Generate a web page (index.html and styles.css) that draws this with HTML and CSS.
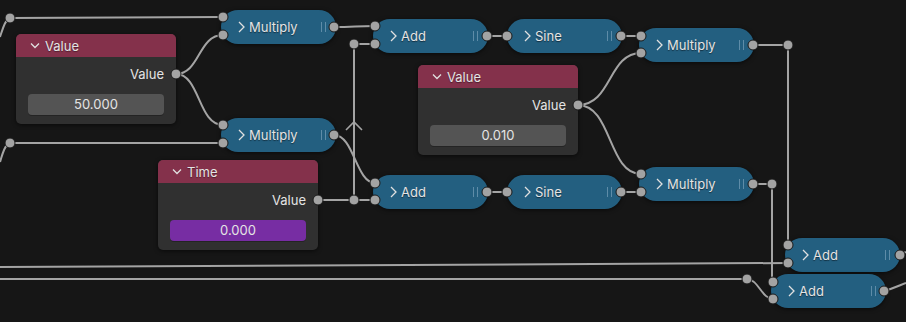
FILE: index.html
```html
<!DOCTYPE html>
<html>

<head>
    <title>Node Editor</title>
    <link rel="stylesheet" href="styles.css">
</head>

<body>
    <div class="canvas">

        <!-- wires go under the nodes -->
        <svg class="wires" width="906" height="322">
            <g class="wire">
                <path d="M0,37 C3,28 5,20 10,18 L223,17" />
                <path d="M0,162 C3,152 5,145 10,143 L223,143" />
                <path d="M176,74 C200,74 198,35 223,35" />
                <path d="M176,74 C200,74 198,125 223,125" />
                <path d="M334,27 C354,27 356,26 375,26" />
                <path d="M354,44 L375,44 M354,44 L354,200" />
                <path d="M318,200 L375,200" />
                <path d="M334,135 C354,135 356,183 375,183" />
                <path d="M487,36 L507,36 M621,36 L641,36" />
                <path d="M578,105 C612,105 608,53 641,53" />
                <path d="M578,105 C612,105 608,174 641,174" />
                <path d="M487,192 L507,192 M621,192 L641,192" />
                <path d="M753,45 L788,45 L788,245" />
                <path d="M753,184 L772,184 L772,282" />
                <path d="M0,267 C400,266 700,263 788,263" />
                <path d="M0,279 L747,279 C758,279 762,299 773,299" />
                <path d="M900,255 L906,252" />
                <path d="M884,291 C895,288 900,285 906,283" />
                <path class="arrow" d="M346,130 L354,122 L362,130" />
            </g>
        </svg>

        <!-- full nodes -->
        <div class="node" style="left:16px; top:34px;">
            <div class="node-head">
                <svg class="fold" width="10" height="6" viewBox="0 0 10 6"><path d="M1,0.5 L5,4.5 L9,0.5" /></svg>
                Value
            </div>
            <div class="node-body">
                <div class="out-label">Value</div>
                <div class="field">50.000</div>
            </div>
        </div>

        <div class="node" style="left:418px; top:65px;">
            <div class="node-head">
                <svg class="fold" width="10" height="6" viewBox="0 0 10 6"><path d="M1,0.5 L5,4.5 L9,0.5" /></svg>
                Value
            </div>
            <div class="node-body">
                <div class="out-label">Value</div>
                <div class="field">0.010</div>
            </div>
        </div>

        <div class="node" style="left:158px; top:160px;">
            <div class="node-head">
                <svg class="fold" width="10" height="6" viewBox="0 0 10 6"><path d="M1,0.5 L5,4.5 L9,0.5" /></svg>
                Time
            </div>
            <div class="node-body">
                <div class="out-label">Value</div>
                <div class="field field-anim">0.000</div>
            </div>
        </div>

        <!-- collapsed math nodes -->
        <div class="pill" style="left:221px; top:10px;">
            <svg class="open" width="7" height="12" viewBox="0 0 7 12"><path d="M1,1 L6,6 L1,11" /></svg>
            <span class="pill-name">Multiply</span>
            <span class="grip"></span>
        </div>
        <div class="pill" style="left:221px; top:118px;">
            <svg class="open" width="7" height="12" viewBox="0 0 7 12"><path d="M1,1 L6,6 L1,11" /></svg>
            <span class="pill-name">Multiply</span>
            <span class="grip"></span>
        </div>
        <div class="pill" style="left:373px; top:19px;">
            <svg class="open" width="7" height="12" viewBox="0 0 7 12"><path d="M1,1 L6,6 L1,11" /></svg>
            <span class="pill-name">Add</span>
            <span class="grip"></span>
        </div>
        <div class="pill" style="left:507px; top:19px;">
            <svg class="open" width="7" height="12" viewBox="0 0 7 12"><path d="M1,1 L6,6 L1,11" /></svg>
            <span class="pill-name">Sine</span>
            <span class="grip"></span>
        </div>
        <div class="pill" style="left:639px; top:28px;">
            <svg class="open" width="7" height="12" viewBox="0 0 7 12"><path d="M1,1 L6,6 L1,11" /></svg>
            <span class="pill-name">Multiply</span>
            <span class="grip"></span>
        </div>
        <div class="pill" style="left:373px; top:175px;">
            <svg class="open" width="7" height="12" viewBox="0 0 7 12"><path d="M1,1 L6,6 L1,11" /></svg>
            <span class="pill-name">Add</span>
            <span class="grip"></span>
        </div>
        <div class="pill" style="left:507px; top:175px;">
            <svg class="open" width="7" height="12" viewBox="0 0 7 12"><path d="M1,1 L6,6 L1,11" /></svg>
            <span class="pill-name">Sine</span>
            <span class="grip"></span>
        </div>
        <div class="pill" style="left:639px; top:167px;">
            <svg class="open" width="7" height="12" viewBox="0 0 7 12"><path d="M1,1 L6,6 L1,11" /></svg>
            <span class="pill-name">Multiply</span>
            <span class="grip"></span>
        </div>
        <div class="pill" style="left:785px; top:238px;">
            <svg class="open" width="7" height="12" viewBox="0 0 7 12"><path d="M1,1 L6,6 L1,11" /></svg>
            <span class="pill-name">Add</span>
            <span class="grip"></span>
        </div>
        <div class="pill" style="left:771px; top:274px;">
            <svg class="open" width="7" height="12" viewBox="0 0 7 12"><path d="M1,1 L6,6 L1,11" /></svg>
            <span class="pill-name">Add</span>
            <span class="grip"></span>
        </div>

        <!-- sockets and reroutes sit on top -->
        <svg class="sockets" width="906" height="322">
            <g class="socket">
                <circle cx="10" cy="18" r="5" />
                <circle cx="10" cy="143" r="5" />
                <circle cx="354" cy="44" r="5" />
                <circle cx="354" cy="200" r="5" />
                <circle cx="788" cy="45" r="5" />
                <circle cx="772" cy="184" r="5" />
                <circle cx="747" cy="279" r="5" />

                <circle cx="176" cy="74" r="5" />
                <circle cx="578" cy="105" r="5" />
                <circle cx="318" cy="200" r="5" />

                <circle cx="223" cy="17" r="5" />
                <circle cx="223" cy="35" r="5" />
                <circle cx="334" cy="27" r="5" />
                <circle cx="223" cy="125" r="5" />
                <circle cx="223" cy="143" r="5" />
                <circle cx="334" cy="135" r="5" />

                <circle cx="375" cy="26" r="5" />
                <circle cx="375" cy="44" r="5" />
                <circle cx="487" cy="36" r="5" />
                <circle cx="507" cy="36" r="5" />
                <circle cx="621" cy="36" r="5" />
                <circle cx="641" cy="36" r="5" />
                <circle cx="641" cy="53" r="5" />
                <circle cx="753" cy="45" r="5" />

                <circle cx="375" cy="183" r="5" />
                <circle cx="375" cy="200" r="5" />
                <circle cx="487" cy="192" r="5" />
                <circle cx="507" cy="192" r="5" />
                <circle cx="621" cy="192" r="5" />
                <circle cx="641" cy="174" r="5" />
                <circle cx="641" cy="192" r="5" />
                <circle cx="753" cy="184" r="5" />

                <circle cx="788" cy="245" r="5" />
                <circle cx="788" cy="263" r="5" />
                <circle cx="900" cy="255" r="5" />
                <circle cx="773" cy="282" r="5" />
                <circle cx="773" cy="299" r="5" />
                <circle cx="884" cy="291" r="5" />
            </g>
        </svg>
    </div>
</body>

</html>
```

FILE: styles.css
```css
html,
body {
    margin: 0;
    background-color: #161616;
}

body {
    font-family: Inter, "DejaVu Sans", sans-serif;
    font-size: 13px;
    color: #e4e4e4;
}

.canvas {
    position: relative;
    width: 906px;
    height: 322px;
    overflow: hidden;
}

.wires,
.sockets {
    position: absolute;
    left: 0;
    top: 0;
}

.sockets {
    z-index: 5;
}

.wire path {
    fill: none;
    stroke: #a4a4a4;
    stroke-width: 2;
}

.wire .arrow {
    stroke-width: 1.6;
}

.socket circle {
    fill: #a3a3a3;
    stroke: #1a1a1a;
    stroke-width: 1;
}

/* full nodes */

.node {
    position: absolute;
    width: 160px;
    border-radius: 5px;
    background-color: #303030;
    box-shadow: 0 1px 4px rgba(0, 0, 0, 0.6);
    overflow: hidden;
}

.node-head {
    height: 23px;
    background-color: #84314b;
    display: flex;
    align-items: center;
    padding-left: 14px;
    gap: 5px;
    text-shadow: 0 1px 1px rgba(0, 0, 0, 0.4);
}

.fold path,
.open path {
    fill: none;
    stroke: #e0e0e0;
    stroke-width: 1.3;
}

.node-body {
    padding: 8px 12px 9px 12px;
    display: flex;
    flex-direction: column;
    gap: 11px;
}

.out-label {
    height: 18px;
    line-height: 18px;
    text-align: right;
}

.field {
    height: 21px;
    line-height: 21px;
    border-radius: 4px;
    background-color: #545454;
    text-align: center;
    box-shadow: 0 1px 0 rgba(0, 0, 0, 0.25);
}

.field-anim {
    background-color: #772da3;
}

/* collapsed nodes */

.pill {
    position: absolute;
    width: 115px;
    height: 34px;
    border-radius: 17px;
    background-color: #235f80;
    box-shadow: 0 1px 4px rgba(0, 0, 0, 0.6);
    display: flex;
    align-items: center;
    padding-left: 17px;
    box-sizing: border-box;
    text-shadow: 0 1px 1px rgba(0, 0, 0, 0.5);
}

.pill .open {
    margin-right: 4px;
}

.pill-name {
    flex: 1;
}

.grip {
    width: 5px;
    height: 10px;
    margin-right: 10px;
    border-left: 1.5px solid #5e8ca8;
    border-right: 1.5px solid #5e8ca8;
    box-sizing: border-box;
}
```
